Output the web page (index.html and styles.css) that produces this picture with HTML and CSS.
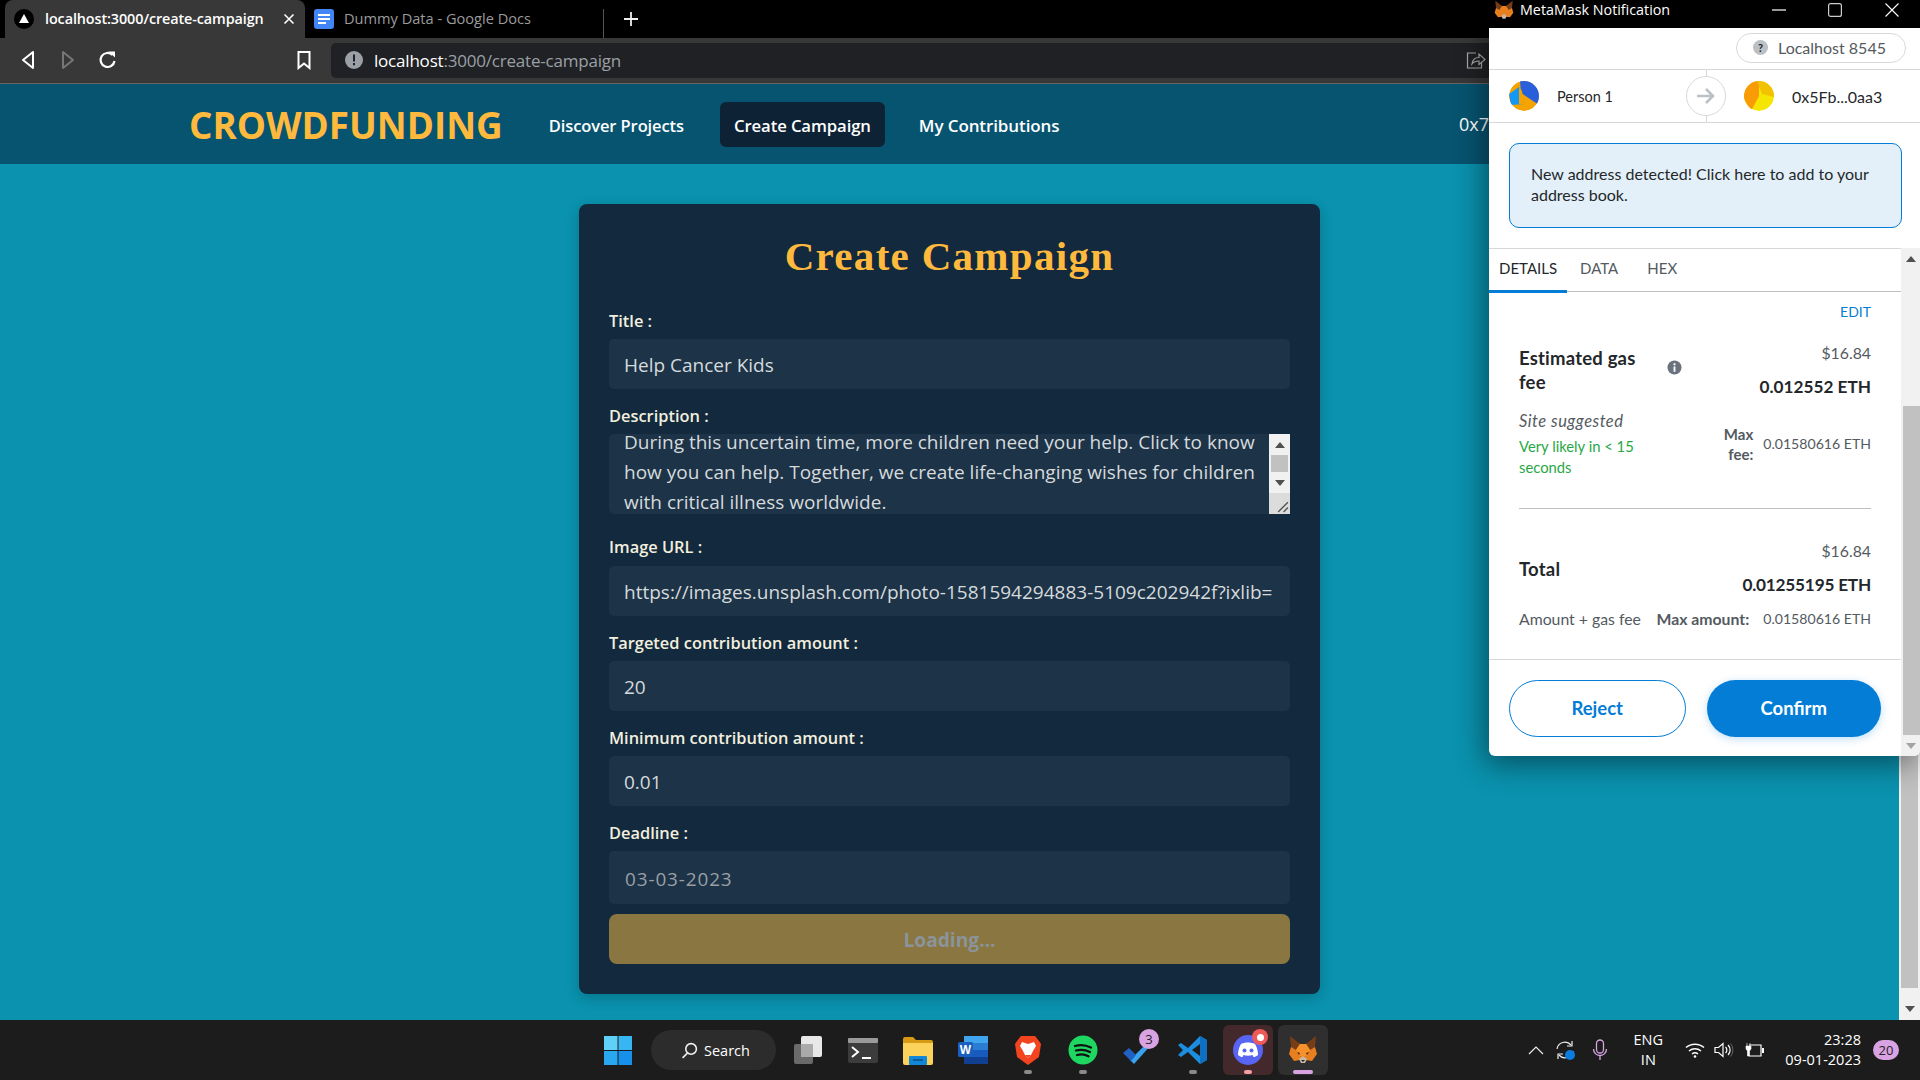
FILE: index.html
```html
<!DOCTYPE html>
<html lang="en"><head>
	<meta charset="utf-8">
	<title>Create Campaign</title>
	<link rel="stylesheet" href="styles.css">
</head><body>
<div class="desktop">
	<div class="tabstrip">
		<div class="tab active">
			<svg class="favicon" viewBox="0 0 20 20"><circle cx="10" cy="10" r="10" fill="#000"/><path d="M10 5l5 9H5z" fill="#fff"/></svg>
			<span class="tab-title">localhost:3000/create-campaign</span>
			<svg class="tab-close" viewBox="0 0 12 12"><path d="M1.5 1.5l9 9M10.5 1.5l-9 9" stroke="#fff" stroke-width="1.6"/></svg>
		</div>
		<div class="tab">
			<svg class="docicon" viewBox="0 0 20 20"><rect width="20" height="20" rx="3" fill="#4285f4"/><path d="M4 5h12v2H4zM4 9h12v2H4zM4 13h8v2H4z" fill="#fff"/></svg>
			<span class="tab-title dim">Dummy Data - Google Docs</span>
		</div>
		<span class="tab-divider"></span>
		<svg class="newtab" viewBox="0 0 16 16"><path d="M8 1v14M1 8h14" stroke="#eee" stroke-width="1.8"/></svg>
	</div>
	<div class="toolbar">
		<svg class="tool back" viewBox="0 0 16 20"><path d="M13 2L3 10l10 8z" fill="none" stroke="#fff" stroke-width="2" stroke-linejoin="round"/></svg>
		<svg class="tool forward" viewBox="0 0 16 20"><path d="M3 2l10 8-10 8z" fill="none" stroke="#777" stroke-width="2" stroke-linejoin="round"/></svg>
		<svg class="tool reload" viewBox="0 0 20 20"><path d="M16.5 11a7 7 0 1 1-2-6" fill="none" stroke="#fff" stroke-width="2.2"/><path d="M10.5 1.5H17v6z" fill="#fff"/></svg>
		<svg class="tool bookmark" viewBox="0 0 16 20"><path d="M2.5 2h11v16L8 13.500 2.500 18z" fill="none" stroke="#fff" stroke-width="2"/></svg>
		<div class="omnibox">
			<svg class="insecure" viewBox="0 0 18 18"><circle cx="9" cy="9" r="9" fill="#9aa0a6"/><path d="M8 3.500h2v7H8zM8 12h2v2.200H8z" fill="#202124"/></svg>
			<span class="url">localhost<span class="dim">:3000/create-campaign</span></span>
			<svg class="share" viewBox="0 0 20 18"><path d="M10 2H1.500v15h14v-5" fill="none" stroke="#aaa" stroke-width="1.200"/><path d="M6 13c.5-4 3-6.500 7-6.500V3l6 5.500-6 5V10c-3 0-5.500 1-7 3z" fill="none" stroke="#aaa" stroke-width="1.200"/></svg>
		</div>
	</div>
	<div class="page">
		<header class="navbar">
			<span class="logo">CROWDFUNDING</span>
			<a class="navlink">Discover Projects</a>
			<a class="navlink current">Create Campaign</a>
			<a class="navlink mine">My Contributions</a>
			<span class="wallet">0x7</span>
		</header>
		<main class="content">
			<form class="card">
				<h1>Create Campaign</h1>
				<label>Title :</label>
				<div class="field">Help Cancer Kids</div>
				<label>Description :</label>
				<div class="textarea">
					<p>During this uncertain time, more children need your help. Click to know how you can help. Together, we create life-changing wishes for children with critical illness worldwide.</p>
					<div class="ta-scroll">
						<span class="ta-btn"><i class="arrow up"></i></span>
						<span class="ta-thumb"></span>
						<span class="ta-btn"><i class="arrow down"></i></span>
						<span class="ta-grip"><svg viewBox="0 0 12 12"><path d="M2 11L11 2M7 11l4-4" stroke="#555" stroke-width="1.300"/></svg></span>
					</div>
				</div>
				<label class="after-ta">Image URL :</label>
				<div class="field">https://images.unsplash.com/photo-1581594294883-5109c202942f?ixlib=</div>
				<label>Targeted contribution amount :</label>
				<div class="field">20</div>
				<label>Minimum contribution amount :</label>
				<div class="field">0.01</div>
				<label>Deadline :</label>
				<div class="field date">03-03-2023</div>
				<div class="submit">Loading...</div>
			</form>
		</main>
		<div class="pagebar">
			<span class="pagebar-thumb"></span>
			<span class="pagebar-btn"><i class="arrow down"></i></span>
		</div>
	</div>
	<div class="taskbar">
		<svg class="winlogo" viewBox="0 0 28 29"><rect width="13.5" height="14" fill="#5fd0f8"/><rect x="14.5" width="13.5" height="14" fill="#38b6f4"/><rect y="15" width="13.5" height="14" fill="#2aa8ef"/><rect x="14.5" y="15" width="13.5" height="14" fill="#1690ea"/></svg>
		<div class="searchpill">
			<svg viewBox="0 0 16 16"><circle cx="9.5" cy="6.5" r="5" fill="none" stroke="#eee" stroke-width="1.5"/><path d="M6 10.5L1.500 15" stroke="#eee" stroke-width="1.5"/></svg>
			<span>Search</span>
		</div>
		<div class="tasks">
			<div class="task">
				<svg viewBox="0 0 30 30"><rect x="1" y="9" width="19" height="20" rx="2" fill="#6a6a6a"/><rect x="8" y="1" width="21" height="21" rx="2" fill="#e8e8e8"/><rect x="8" y="9" width="12" height="13" fill="#aaa"/></svg>
			</div>
			<div class="task">
				<svg viewBox="0 0 30 30"><rect y="3" width="30" height="25" rx="2" fill="#3c3c3c"/><rect y="3" width="30" height="5" rx="1" fill="#9a9a9a"/><path d="M4 12l6 5-6 5" fill="none" stroke="#fff" stroke-width="2"/><path d="M14 23h9" stroke="#fff" stroke-width="2"/></svg>
			</div>
			<div class="task">
				<svg viewBox="0 0 30 30"><path d="M0 4a2 2 0 0 1 2-2h8l3 3h15a2 2 0 0 1 2 2v4H0z" fill="#d69b12"/><path d="M0 8h30v20a2 2 0 0 1-2 2H2a2 2 0 0 1-2-2z" fill="#fbd35a"/><rect x="6" y="21" width="18" height="9" rx="1" fill="#1287d8"/><path d="M10 25h10" stroke="#0b4f86" stroke-width="1.5"/></svg>
			</div>
			<div class="task">
				<svg viewBox="0 0 30 30"><rect x="6" y="1" width="24" height="7" fill="#41a5ee"/><rect x="6" y="8" width="24" height="7" fill="#2b7cd3"/><rect x="6" y="15" width="24" height="7" fill="#185abd"/><rect x="6" y="22" width="24" height="7" fill="#103f91"/><rect y="7" width="15" height="15" rx="1.5" fill="#1a5fc0"/><text x="7.5" y="19" class="word-w">W</text></svg>
			</div>
			<div class="task">
				<svg viewBox="0 0 30 30"><path d="M4 6l4-5h14l4 5 2 3-2 13-11 8-11-8L2 9z" fill="#f1441f"/><path d="M15 9l6-2 2 4-3 5-2 4-3 3-3-3-2-4-3-5 2-4z" fill="#fff"/><path d="M12 20h6l-3 3z" fill="#f1441f"/></svg>
			</div>
			<div class="task">
				<svg viewBox="0 0 30 30"><circle cx="15" cy="15" r="14.5" fill="#1ed760"/><path d="M7 11c5-1.500 11-1 16 1.500M8 15.500c4.500-1.200 9.500-.8 14 1.500M9 20c3.500-1 8-.7 11.500 1.200" fill="none" stroke="#111" stroke-width="2.3" stroke-linecap="round"/></svg>
			</div>
			<div class="task">
				<svg viewBox="0 0 30 30"><path d="M7 25L25 7l3 3-17 19z" fill="#3aa3ee"/><path d="M0 18l6-5 7 7-5 6z" fill="#1f62c4"/></svg>
				<span class="count">3</span>
			</div>
			<div class="task">
				<svg viewBox="0 0 30 30"><path d="M0 10l3-2 7 5L22 1l7 4v20l-7 4-12-12-7 5-3-2 5-5z" fill="#1c8ee0"/><path d="M22 1l7 4v20l-7 4z" fill="#0f6fc0"/><path d="M22 9v12l-8-6z" fill="#1c1c1c"/></svg>
			</div>
			<div class="task open-red">
				<svg viewBox="0 0 30 30"><circle cx="15" cy="15" r="15" fill="#5865f2"/><path d="M8 9c4-2 10-2 14 0 2 3 3 7 3 11-2 1.500-3 2-4.500 2l-1-2c-3 1-6 1-9 0l-1 2C8 22 7 21.500 5 20c0-4 1-8 3-11z" fill="#fff"/><circle cx="11.5" cy="15.5" r="2" fill="#5865f2"/><circle cx="18.5" cy="15.5" r="2" fill="#5865f2"/></svg>
				<span class="ping"></span>
			</div>
			<div class="task open-grey">
				<svg viewBox="0 0 30 30"><path d="M3 12L8 7l4 2h6l4-2 5 5 2 7-5 7-6-1h-6l-6 1-5-7z" fill="#e87f1e"/><path d="M2 1l10 8-4 6-5-3z" fill="#763d16"/><path d="M28 1L18 9l4 6 5-3z" fill="#763d16"/><path d="M8 15l4-6h6l4 6-4 6h-6z" fill="#f6912b"/><path d="M11 24l4-3 4 3-2 4h-4z" fill="#c9b7a8"/><path d="M13 25h4l-2 2z" fill="#222"/><path d="M9 17l3 1-1 2zM21 17l-3 1 1 2z" fill="#3a2a1a"/></svg>
			</div>
		</div>
		<div class="tray">
			<svg class="ic-chev" viewBox="0 0 16 10"><path d="M1 9l7-7 7 7" fill="none" stroke="#eee" stroke-width="1.2"/></svg>
			<svg class="ic-sync" viewBox="0 0 20 20"><path d="M2 9a8 8 0 0 1 14-4M18 11a8 8 0 0 1-14 4" fill="none" stroke="#eee" stroke-width="1.2"/><path d="M17 1v5h-5M3 19v-5h5" fill="none" stroke="#eee" stroke-width="1.2"/><circle cx="15" cy="15" r="5" fill="#0a7ce0"/></svg>
			<svg class="ic-mic" viewBox="0 0 16 22"><rect x="4.5" y="1" width="7" height="13" rx="3.5" fill="none" stroke="#d9a3e3" stroke-width="1.3"/><path d="M1.500 10a6.500 6.500 0 0 0 13 0M8 17v4" fill="none" stroke="#d9a3e3" stroke-width="1.3"/></svg>
			<div class="lang"><span>ENG</span><span>IN</span></div>
			<svg class="ic-wifi" viewBox="0 0 20 16"><path d="M1 5.500c5-4.500 13-4.500 18 0M4 9c3.500-3 8.500-3 12 0M7 12c1.800-1.400 4.200-1.400 6 0" fill="none" stroke="#fff" stroke-width="1.5"/><circle cx="10" cy="14.5" r="1.3" fill="#fff"/></svg>
			<svg class="ic-vol" viewBox="0 0 20 16"><path d="M1 5.500h3.500L9 1.500v13l-4.500-4H1z" fill="none" stroke="#fff" stroke-width="1.2"/><path d="M11.500 5a4 4 0 0 1 0 6M14 3a7 7 0 0 1 0 10" fill="none" stroke="#fff" stroke-width="1.2"/><path d="M16.500 1.500a10 10 0 0 1 0 13" fill="none" stroke="#666" stroke-width="1"/></svg>
			<svg class="ic-batt" viewBox="0 0 20 16"><path d="M4 3h12v11H4" fill="none" stroke="#fff" stroke-width="1.2"/><path d="M17 6h2v5h-2" fill="#fff"/><path d="M2 1v3M5 1v3M1 4h5v3l-1.500 2v5h-2V9L1 7z" fill="#fff" stroke="#fff" stroke-width=".6"/></svg>
			<div class="clock"><span>23:28</span><span>09-01-2023</span></div>
			<span class="notif">20</span>
		</div>
	</div>

	<!-- the metamask window sits on top of the browser -->
	<section class="popup">
		<div class="pop-title">
			<svg class="foxicon" viewBox="0 0 30 30"><path d="M3 12L8 7l4 2h6l4-2 5 5 2 7-5 7-6-1h-6l-6 1-5-7z" fill="#e87f1e"/><path d="M2 1l10 8-4 6-5-3z" fill="#763d16"/><path d="M28 1L18 9l4 6 5-3z" fill="#763d16"/><path d="M11 24l4-3 4 3-2 4h-4z" fill="#c9b7a8"/></svg>
			<span>MetaMask Notification</span>
			<svg class="winbtn min" viewBox="0 0 14 14"><path d="M0 7h14" stroke="#fff" stroke-width="1.2"/></svg>
			<svg class="winbtn max" viewBox="0 0 14 14"><rect x=".6" y=".6" width="12.8" height="12.8" rx="2" fill="none" stroke="#ccc" stroke-width="1.2"/></svg>
			<svg class="winbtn close" viewBox="0 0 14 14"><path d="M.5.500l13 13M13.500.500l-13 13" stroke="#fff" stroke-width="1.1"/></svg>
		</div>
		<div class="pop-network">
			<div class="netpill"><span class="q">?</span><span>Localhost 8545</span></div>
		</div>
		<div class="pop-accounts">
			<div class="acct">
				<svg class="jazz" viewBox="0 0 30 30"><circle cx="15" cy="15" r="15" fill="#f5a300"/><path d="M11 0h19v24L12 12z" fill="#2a5fdc"/><path d="M0 13l10-7 5 17-13 1z" fill="#1597f5"/><path d="M10 6l3 4 2 13H10z" fill="#f5a300"/></svg>
				<span>Person 1</span>
			</div>
			<div class="flow"><svg viewBox="0 0 20 20"><path d="M1 10h16M10 3l7 7-7 7" fill="none" stroke="#bbc0c5" stroke-width="2.6"/></svg></div>
			<div class="acct second">
				<svg class="jazz" viewBox="0 0 30 30"><circle cx="15" cy="15" r="15" fill="#f5e500"/><path d="M15 15L7 30 0 18V0h15z" fill="#f99b05"/><path d="M13 0h17v16l-12-3z" fill="#f2c200"/></svg>
				<span>0x5Fb...0aa3</span>
			</div>
		</div>
		<div class="pop-scrollarea">
			<div class="pop-main">
				<div class="notice">New address detected! Click here to add to your address book.</div>
				<nav class="pop-tabs">
					<span class="pop-tab on">DETAILS</span>
					<span class="pop-tab">DATA</span>
					<span class="pop-tab">HEX</span>
				</nav>
				<div class="details">
					<div class="edit">EDIT</div>
					<div class="gasrow">
						<div class="gaslabel">Estimated gas fee</div>
						<svg class="infoicon" viewBox="0 0 16 16"><circle cx="8" cy="8" r="7.5" fill="#6a737d"/><path d="M7 3.500h2v2H7zM7 7h2v5.500H7z" fill="#fff"/></svg>
						<div class="amounts"><span class="fiat">$16.84</span><b>0.012552 ETH</b></div>
					</div>
					<div class="subrow">
						<div class="subleft">
							<em>Site suggested</em>
							<span class="likely">Very likely in &lt; 15 seconds</span>
						</div>
						<div class="maxfee"><b>Max fee:</b><span>0.01580616 ETH</span></div>
					</div>
					<hr>
					<div class="gasrow total">
						<div class="gaslabel">Total</div>
						<div class="amounts"><span class="fiat">$16.84</span><b>0.01255195 ETH</b></div>
					</div>
					<div class="totalsub">
						<span>Amount + gas fee</span>
						<b>Max amount:</b>
						<span class="val">0.01580616 ETH</span>
					</div>
				</div>
				<div class="pop-actions">
					<span class="btn reject">Reject</span>
					<span class="btn confirm">Confirm</span>
				</div>
			</div>
			<div class="pop-bar">
				<span class="pop-btn"><i class="arrow up"></i></span>
				<span class="pop-thumb"></span>
				<span class="pop-btn"><i class="arrow down faint"></i></span>
			</div>
		</div>
	</section>
</div>
</body></html>
```

FILE: styles.css
```css
* { box-sizing:border-box }
html, body { margin:0; padding:0; height:100% }
body { font-family:"Open Sans", "Noto Sans", sans-serif; overflow:hidden; background:#000 }
svg { display:block; flex:none }

.desktop { position:relative; width:1920px; height:1080px; display:flex; flex-direction:column; overflow:hidden }

/* browser chrome */
.tabstrip { height:38px; background:#000; display:flex; align-items:center; padding-left:5px; flex:none }
.tab { width:300px; height:38px; display:flex; align-items:center; color:#fff; font-size:14.4px; font-weight:600 }
.tab.active { background:#383838; border-radius:8px 8px 0 0; padding-left:9px }
.tab:not(.active) { width:298px; padding-left:9px }
.favicon { width:20px; height:20px; margin-right:11px }
.tab-title { white-space:nowrap; letter-spacing:-0.1px; padding-bottom:2px }
.tab-title.dim { color:#9b9b9b; font-weight:400; letter-spacing:0; font-size:14.6px }
.tab-close { width:12px; height:12px; margin-left:auto; margin-right:10px }
.docicon { width:20px; height:20px; margin-right:10px }
.tab-divider { width:1px; height:29px; background:#555; margin-top:9px }
.newtab { width:16px; height:16px; margin-left:19px }

.toolbar { height:46px; background:#383838; border-bottom:1px solid #666; display:flex; align-items:center; flex:none; padding-bottom:1px }
.tool { height:20px }
.back { width:16px; margin-left:20px }
.forward { width:16px; margin-left:24px }
.reload { width:20px; margin-left:22px }
.bookmark { width:16px; margin-left:178px }
.omnibox { width:1158px; height:35px; margin-left:19px; background:#202124; border-radius:5px 0 0 5px; display:flex; align-items:center; padding-left:14px; padding-right:3px }
.insecure { width:18px; height:18px; margin-right:11px }
.url { color:#fff; font-size:17px; letter-spacing:-0.2px; white-space:nowrap }
.url .dim { color:#9aa0a6 }
.share { width:20px; height:18px; margin-left:auto }

/* the dapp page */
.page { position:relative; flex:1; min-height:0; display:flex; flex-direction:column; background:#0a92ae }
.navbar { height:80px; flex:none; display:flex; align-items:center; background:#075470; padding:0 431px 0 189px; color:#fff; overflow:hidden }
.logo { color:#ffb93d; font-size:36.8px; font-weight:700; margin-right:32px; padding-top:2px; white-space:nowrap }
.navlink { font-size:16.5px; font-weight:600; letter-spacing:-0.1px; padding:2px 14px 0; height:45px; display:flex; align-items:center; border-radius:6px; margin-right:22px; white-space:nowrap }
.navlink.current { background:#0e2235; font-size:16.7px; margin-right:20px }
.navlink.mine { font-size:17px }
.wallet { font-size:18px; margin-left:auto }

.content { flex:1; min-height:0; width:1899px; display:flex; justify-content:center; padding-top:40px }
.card { width:741px; height:790px; background:#13293d; border-radius:8px; padding:30px 30px; box-shadow:0 4px 14px rgba(0,0,0,.2) }
.card h1 { margin:0 0 30px; height:45px; line-height:45px; text-align:center; color:#ffb93d; font-family:"Liberation Serif", serif; font-size:41px; font-weight:700; letter-spacing:1.3px }
.card label { display:block; height:24px; line-height:24px; margin:15px 0 6px; color:#f2efdf; font-size:16.4px; font-weight:600 }
.card h1 + label { margin-top:0 }
.card label.after-ta { margin:21px 0 7px }
.field { height:50px; line-height:52px; padding:0 15px; background:#1d3347; border-radius:5px; color:#d5dadd; font-size:19px; white-space:nowrap; overflow:hidden }
.field.date { height:53px; line-height:56px; color:#9a9fa5; padding-left:16px; letter-spacing:.9px; font-size:18.9px }
.textarea { display:flex; height:80px; background:#1d3347; border-radius:5px 0 0 5px; overflow:hidden }
.textarea p { flex:1; margin:-7px 0 0; padding:0 8px 0 15px; color:#d5dadd; font-size:19px; line-height:30px }
.ta-scroll { width:21px; flex:none; display:flex; flex-direction:column; align-items:center; background:#f1f1f1 }
.ta-btn { height:21px; flex:none; display:flex; align-items:center; justify-content:center }
.ta-thumb { width:17px; height:17px; background:#c1c1c1 }
.ta-grip { margin-top:auto; align-self:stretch; height:21px; background:#dcdcdc; display:flex; justify-content:flex-end; align-items:flex-end; padding:0 1px 1px 0 }
.ta-grip svg { width:13px; height:13px }
.submit { height:50px; line-height:52px; margin-top:10px; text-align:center; background:#897640; border-radius:8px; color:#8b949a; font-size:19.2px; font-weight:700 }

.arrow { display:block; width:0; height:0; border-left:5px solid transparent; border-right:5px solid transparent }
.arrow.up { border-bottom:6px solid #505050 }
.arrow.down { border-top:6px solid #505050 }
.arrow.down.faint { border-top-color:#a3a3a3 }

.pagebar { position:absolute; right:0; top:0; bottom:0; width:21px; background:#f1f1f1; display:flex; flex-direction:column; align-items:center }
.pagebar-thumb { flex:1; width:17px; background:#c1c1c1 }
.pagebar-btn { height:32px; padding-top:10px; flex:none; display:flex; align-items:center; justify-content:center }

/* windows taskbar */
.taskbar { height:60px; flex:none; display:flex; align-items:center; background:#1c1c1c; color:#fff; padding-left:604px }
.winlogo { width:28px; height:29px }
.searchpill { width:125px; height:40px; margin-left:19px; background:#2c2c2c; border-radius:20px; display:flex; align-items:center; padding-left:30px; font-size:14.5px; gap:6px }
.searchpill svg { width:17px; height:17px }
.tasks { display:flex; gap:5px; margin-left:7px }
.task { position:relative; width:50px; height:50px; border-radius:6px; display:flex; align-items:center; justify-content:center }
.task svg { width:30px; height:30px }
.word-w { fill:#fff; font:700 12px "Liberation Sans", sans-serif; text-anchor:middle }
.task.open-red { background:#43292c }
.task.open-grey { background:#2f2f2f }
.count { position:absolute; left:26px; top:4px; width:20px; height:20px; border-radius:50%; background:#d9a3e3; color:#222; font-size:13px; line-height:20px; text-align:center }
.ping { position:absolute; left:29px; top:4px; width:16px; height:16px; border-radius:50%; background:#ec5a5a; display:flex; align-items:center; justify-content:center }
.ping::after { content:''; width:7px; height:7px; border-radius:50%; background:#fff }
.task:nth-child(5)::after, .task:nth-child(6)::after, .task:nth-child(8)::after,
.task.open-red::after { content:''; position:absolute; bottom:1px; left:21px; width:8px; height:4px; border-radius:2px; background:#8a8a8a }
.task.open-red::after { background:#f2a0a0 }
.task.open-grey::after { content:''; position:absolute; bottom:1px; left:15px; width:20px; height:4px; border-radius:2px; background:#d9a3e3 }
.tray { margin-left:auto; display:flex; align-items:center; height:60px; padding-right:21px }
.ic-chev { width:16px; height:10px; margin-right:11px }
.ic-sync { width:20px; height:20px; margin-right:17px }
.ic-mic { width:16px; height:22px; margin-right:24px }
.lang { display:flex; flex-direction:column; align-items:center; font-size:14.5px; line-height:20px; width:32px; margin-right:21px }
.ic-wifi { width:20px; height:16px; margin-right:9px }
.ic-vol { width:20px; height:16px; margin-right:11px }
.ic-batt { width:20px; height:16px; margin-right:20px }
.clock { display:flex; flex-direction:column; align-items:flex-end; font-size:14.5px; line-height:20px; margin-right:12px }
.notif { width:26px; height:20px; border-radius:10px; background:#d9a3e3; color:#222; font-size:13px; line-height:20px; text-align:center }

/* metamask popup */
.popup { position:absolute; left:1489px; top:0; width:431px; height:756px; display:flex; flex-direction:column; background:#fff; border-radius:0 0 6px 6px; box-shadow:-4px 8px 30px rgba(0,0,0,.45); font-family:Lato, "Open Sans", sans-serif; color:#24272a; overflow:hidden }
.pop-title { height:28px; flex:none; background:#000; color:#fff; display:flex; align-items:center; padding-left:5px; padding-bottom:9px; font-size:14.3px; font-family:"Open Sans", sans-serif }
.foxicon { width:20px; height:20px; margin-right:6px }
.winbtn { width:14px; height:14px }
.winbtn.min { margin-left:auto }
.winbtn.max { margin-left:42px }
.winbtn.close { margin-left:43px; margin-right:21px }
.pop-network { height:42px; flex:none; border-bottom:1px solid #d6d9dc; display:flex; justify-content:flex-end; align-items:center; padding:0 14px 2px 0 }
.netpill { width:170px; height:30px; border:1px solid #d6d9dc; border-radius:15px; display:flex; align-items:center; padding-left:16px; gap:10px; font-size:16px; color:#535a61 }
.q { width:15px; height:15px; border-radius:50%; background:#bbc0c5; color:#24272a; font-size:11px; font-weight:700; text-align:center; line-height:15px }
.pop-accounts { height:53px; flex:none; border-bottom:1px solid #d6d9dc; display:flex; align-items:center; font-size:14.5px }
.acct { display:flex; align-items:center; gap:18px; margin-left:20px; width:177px }
.acct.second { margin-left:0; width:auto; font-size:16px }
.jazz { width:30px; height:30px; border-radius:50% }
.flow { position:relative; width:40px; height:40px; border:1px solid #d6d9dc; border-radius:50%; display:flex; align-items:center; justify-content:center; background:#fff; margin-right:18px }
.flow svg { width:20px; height:20px }
.flow::before, .flow::after { content:''; position:absolute; left:18.5px; width:1px; height:7px; background:#d6d9dc }
.flow::before { top:-7px }
.flow::after { bottom:-7px }
.pop-scrollarea { flex:1; min-height:0; position:relative; display:flex; flex-direction:column }
.pop-main { flex:1; min-height:0; display:flex; flex-direction:column }
.notice { margin:20px 18px 20px 20px; height:85px; flex:none; padding:19px 20px 0 21px; background:#e3f0f9; border:1px solid #037dd6; border-radius:10px; font-size:16px; line-height:21px }
.pop-tabs { height:44px; flex:none; margin-right:19px; padding-bottom:4px; display:flex; border-top:1px solid #d6d9dc; border-bottom:1px solid #bbc0c5; font-size:15px; color:#535a61; align-items:center }
.pop-tab { margin-left:23px }
.pop-tab:nth-child(3) { margin-left:29px }
.pop-tab.on { color:#24272a; margin-left:10px; position:relative }
.pop-tab.on::after { content:''; position:absolute; left:-10px; top:31px; width:78px; height:3px; background:#037dd6 }
.details { flex:none; margin-right:19px; padding:0 30px 30px }
.edit { text-align:right; color:#037dd6; font-size:14px; line-height:20px; margin-top:10px }
.gasrow { display:flex; align-items:flex-start; margin-top:20px }
.gaslabel { width:118px; font-size:18.5px; letter-spacing:.2px; font-weight:700; line-height:24px; margin-top:4px }
.infoicon { width:15px; height:15px; margin:18px 0 0 30px }
.amounts { margin-left:auto; display:flex; flex-direction:column; align-items:flex-end }
.fiat { font-size:15.8px; line-height:22px; color:#535a61 }
.amounts b { font-size:17.2px; line-height:24px; margin-top:11px }
.subrow { display:flex; margin-top:12px; font-size:14.8px }
.subleft { width:150px; display:flex; flex-direction:column }
.subleft em { color:#535a61; line-height:20px; margin-bottom:5px; font-size:16.5px; letter-spacing:.5px }
.likely { color:#28a745; line-height:21px; width:120px }
.maxfee { margin:-2px 0 0 auto; display:flex; align-items:center; gap:10px; color:#535a61; font-size:14.1px }
.maxfee b { width:40px; text-align:right; line-height:20px; font-size:15px }
.details hr { margin:30px 0 0; border:0; border-top:1px solid #bbc0c5 }
.gasrow.total { align-items:center; margin-top:31px }
.gasrow.total .gaslabel { margin-top:0 }
.gasrow.total .amounts b { margin-top:11px; letter-spacing:-0.2px }
.totalsub { display:flex; margin-top:12px; font-size:15.8px; color:#535a61; line-height:20px }
.totalsub b { margin-left:auto; margin-right:14px }
.totalsub .val { font-size:14.1px }
.pop-actions { flex:1; margin-right:19px; display:flex; gap:21px; padding:20px 20px 0; border-top:1px solid #d6d9dc }
.btn { flex:1; height:57px; padding-bottom:2px; border-radius:29px; display:flex; align-items:center; justify-content:center; font-size:18.5px; font-weight:700 }
.reject { border:1px solid #037dd6; color:#037dd6 }
.confirm { background:#037dd6; color:#fff; box-shadow:0 2px 8px rgba(3,125,214,.25) }
.pop-bar { position:absolute; right:0; top:125px; bottom:0; width:19px; background:#f1f1f1; display:flex; flex-direction:column; align-items:center }
.pop-btn { height:21px; flex:none; display:flex; align-items:center; justify-content:center; width:100% }
.pop-thumb { flex:1; width:17px; margin-left:2px; margin-top:137px; background:#c1c1c1 }
```
